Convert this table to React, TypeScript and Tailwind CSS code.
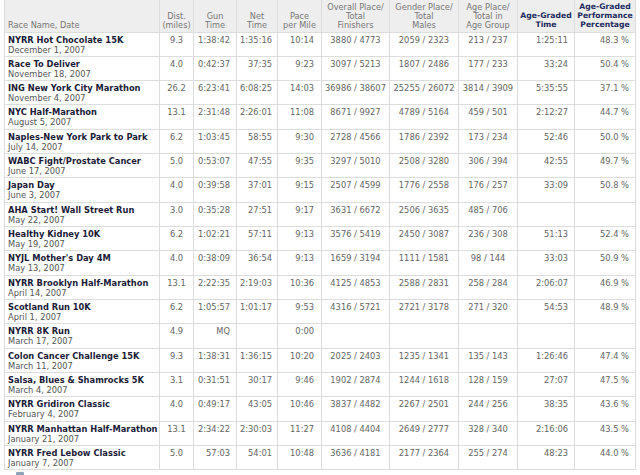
import React from "react";

type Row = [string, string, string, string, string, string, string, string, string, string, string];

const rows: Row[] = [
  ["NYRR Hot Chocolate 15K", "December 1, 2007", "9.3", "1:38:42", "1:35:16", "10:14", "3880 / 4773", "2059 / 2323", "213 / 237", "1:25:11", "48.3 %"],
  ["Race To Deliver", "November 18, 2007", "4.0", "0:42:37", "37:35", "9:23", "3097 / 5213", "1807 / 2486", "177 / 233", "33:24", "50.4 %"],
  ["ING New York City Marathon", "November 4, 2007", "26.2", "6:23:41", "6:08:25", "14:03", "36986 / 38607", "25255 / 26072", "3814 / 3909", "5:35:55", "37.1 %"],
  ["NYC Half-Marathon", "August 5, 2007", "13.1", "2:31:48", "2:26:01", "11:08", "8671 / 9927", "4789 / 5164", "459 / 501", "2:12:27", "44.7 %"],
  ["Naples-New York Park to Park", "July 14, 2007", "6.2", "1:03:45", "58:55", "9:30", "2728 / 4566", "1786 / 2392", "173 / 234", "52:46", "50.0 %"],
  ["WABC Fight/Prostate Cancer", "June 17, 2007", "5.0", "0:53:07", "47:55", "9:35", "3297 / 5010", "2508 / 3280", "306 / 394", "42:55", "49.7 %"],
  ["Japan Day", "June 3, 2007", "4.0", "0:39:58", "37:01", "9:15", "2507 / 4599", "1776 / 2558", "176 / 257", "33:09", "50.8 %"],
  ["AHA Start! Wall Street Run", "May 22, 2007", "3.0", "0:35:28", "27:51", "9:17", "3631 / 6672", "2506 / 3635", "485 / 706", "", ""],
  ["Healthy Kidney 10K", "May 19, 2007", "6.2", "1:02:21", "57:11", "9:13", "3576 / 5419", "2450 / 3087", "236 / 308", "51:13", "52.4 %"],
  ["NYJL Mother's Day 4M", "May 13, 2007", "4.0", "0:38:09", "36:54", "9:13", "1659 / 3194", "1111 / 1581", "98 / 144", "33:03", "50.9 %"],
  ["NYRR Brooklyn Half-Marathon", "April 14, 2007", "13.1", "2:22:35", "2:19:03", "10:36", "4125 / 4853", "2588 / 2831", "258 / 284", "2:06:07", "46.9 %"],
  ["Scotland Run 10K", "April 1, 2007", "6.2", "1:05:57", "1:01:17", "9:53", "4316 / 5721", "2721 / 3178", "271 / 320", "54:53", "48.9 %"],
  ["NYRR 8K Run", "March 17, 2007", "4.9", "MQ", "", "0:00", "", "", "", "", ""],
  ["Colon Cancer Challenge 15K", "March 11, 2007", "9.3", "1:38:31", "1:36:15", "10:20", "2025 / 2403", "1235 / 1341", "135 / 143", "1:26:46", "47.4 %"],
  ["Salsa, Blues & Shamrocks 5K", "March 4, 2007", "3.1", "0:31:51", "30:17", "9:46", "1902 / 2874", "1244 / 1618", "128 / 159", "27:07", "47.5 %"],
  ["NYRR Gridiron Classic", "February 4, 2007", "4.0", "0:49:17", "43:05", "10:46", "3837 / 4482", "2267 / 2501", "244 / 256", "38:35", "43.6 %"],
  ["NYRR Manhattan Half-Marathon", "January 21, 2007", "13.1", "2:34:22", "2:30:03", "11:27", "4108 / 4404", "2649 / 2777", "328 / 340", "2:16:06", "43.5 %"],
  ["NYRR Fred Lebow Classic", "January 7, 2007", "5.0", "57:03", "54:01", "10:48", "3636 / 4181", "2177 / 2364", "255 / 274", "48:23", "44.0 %"],
];

const th = "border border-[#dddddd] align-bottom font-normal text-center text-[#777777] text-[8.2px] leading-[8.7px] pt-[3.4px] pb-[2px] px-[1px] whitespace-nowrap";
const thBlue = "border border-[#dddddd] align-bottom font-bold text-center text-[#1c2a5e] text-[7.7px] leading-[8.7px] pt-[3.4px] pb-[2px] px-[1px] whitespace-nowrap";
const td = "border border-[#dddddd] align-top text-[#666666] text-[8.3px] leading-[10px] pt-[2px] pb-[1.33px] whitespace-nowrap";

export default function App() {
  return (
    <div className="w-[640px] h-[475px] overflow-hidden bg-white font-['DejaVu_Sans',Verdana,sans-serif]">
      <table className="ml-[4px] table-fixed border-collapse w-[631px] border-t-0">
        <colgroup>
          <col className="w-[155px]" />
          <col className="w-[34px]" />
          <col className="w-[43px]" />
          <col className="w-[41px]" />
          <col className="w-[44px]" />
          <col className="w-[68px]" />
          <col className="w-[69px]" />
          <col className="w-[59px]" />
          <col className="w-[57px]" />
          <col className="w-[61px]" />
        </colgroup>
        <thead>
          <tr className="bg-[#eeeeee]">
            <th className={th + " !text-left pl-[3px] border-t-0"}>Race Name, Date</th>
            <th className={th + " border-t-0"}>Dist.<br />(miles)</th>
            <th className={th + " border-t-0"}>Gun<br />Time</th>
            <th className={th + " border-t-0"}>Net<br />Time</th>
            <th className={th + " border-t-0"}>Pace<br />per Mile</th>
            <th className={th + " border-t-0"}>Overall Place/<br />Total<br />Finishers</th>
            <th className={th + " border-t-0"}>Gender Place/<br />Total<br />Males</th>
            <th className={th + " border-t-0"}>Age Place/<br />Total in<br />Age Group</th>
            <th className={thBlue + " border-t-0"}>Age-Graded<br />Time</th>
            <th className={thBlue + " border-t-0"}>Age-Graded<br />Performance<br />Percentage</th>
          </tr>
        </thead>
        <tbody>
          {rows.map((r, i) => (
            <tr key={i}>
              <td className={td + " pl-[3px] pr-0 overflow-visible"}>
                <div className="font-bold text-[#1b1b38]">{r[0]}</div>
                <div className="text-[#555555]">{r[1]}</div>
              </td>
              <td className={td + " text-center"}>{r[2]}</td>
              <td className={td + " text-right pr-[6px]"}>{r[3]}</td>
              <td className={td + " text-right pr-[5px]"}>{r[4]}</td>
              <td className={td + " text-right pr-[7px]"}>{r[5]}</td>
              <td className={td + " text-center"}>{r[6]}</td>
              <td className={td + " text-center"}>{r[7]}</td>
              <td className={td + " text-center"}>{r[8]}</td>
              <td className={td + " text-right pr-[6px]"}>{r[9]}</td>
              <td className={td + " text-right pr-[6px]"}>{r[10]}</td>
            </tr>
          ))}
        </tbody>
      </table>
      <div className="ml-[16px] mt-[2px] w-[8px] h-[8px] rounded-[1px] bg-[#8fa3b8]" />
    </div>
  );
}
